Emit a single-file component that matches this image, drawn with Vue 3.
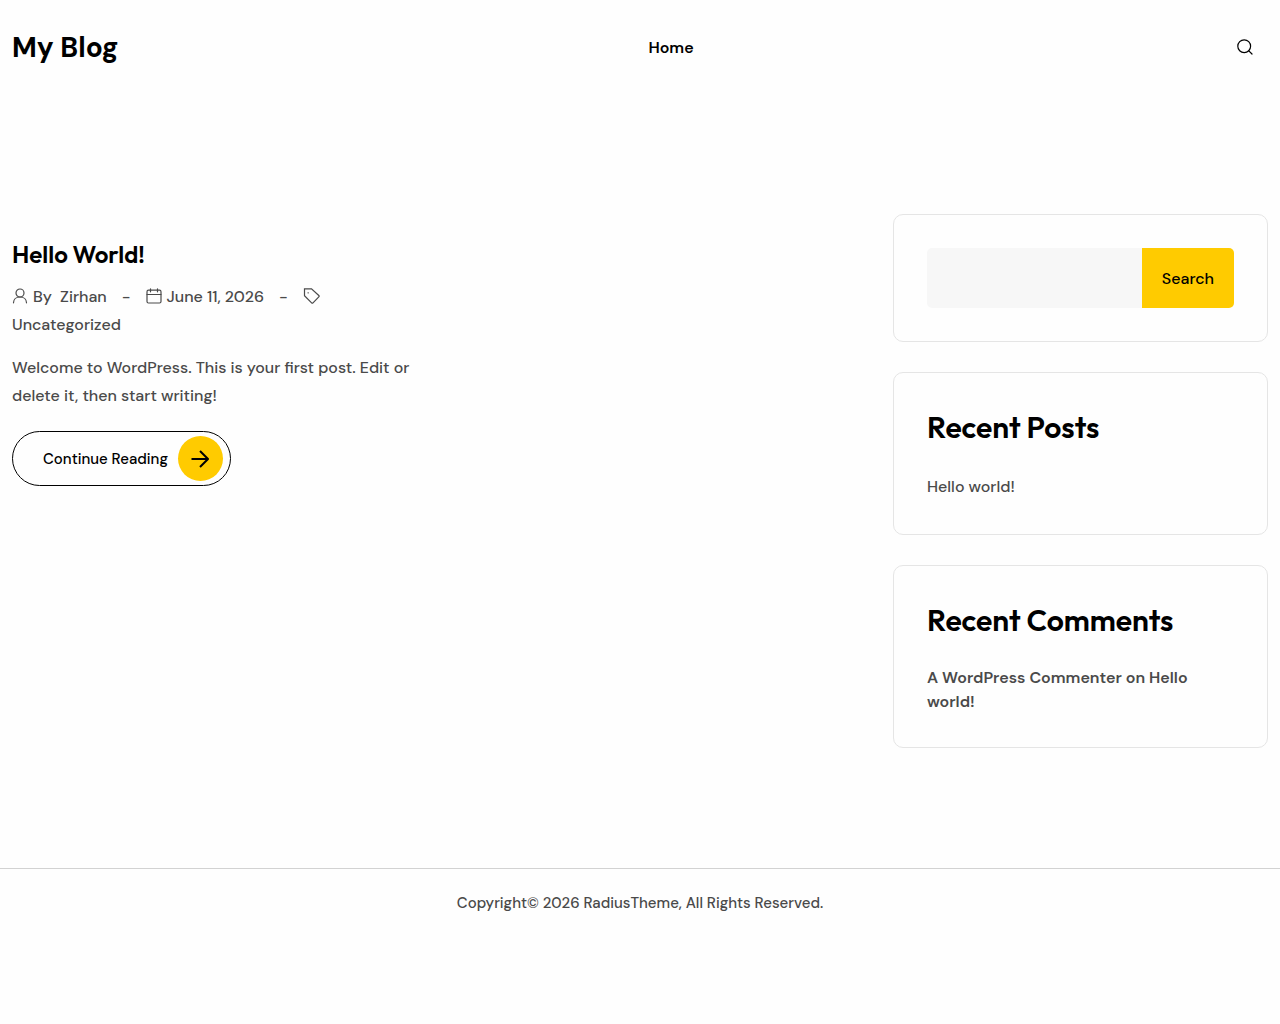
<template>
  <div class="site">
    <header class="site-header">
      <a class="logo" href="#">My Blog</a>
      <nav class="main-nav" aria-label="Main">
        <a href="#">Home</a>
      </nav>
      <div class="header-tools">
        <button class="search-toggle" type="button" aria-label="Open search" @click="focusSearch">
          <svg width="16" height="16" viewBox="0 0 16 16" fill="none" stroke="currentColor" stroke-width="1.2">
            <circle cx="7.2" cy="7.2" r="6.4" />
            <path d="M11.8 11.8l3.2 3.2" stroke-linecap="round" />
          </svg>
        </button>
      </div>
    </header>

    <main class="content">
      <div class="posts">
        <article v-for="post in posts" :key="post.title" class="post">
          <h2 class="post-title"><a href="#">{{ post.title }}</a></h2>
          <div class="post-meta">
            <svg class="meta-icon" width="16" height="16" viewBox="0 0 16 16">
              <circle cx="8" cy="5" r="4" />
              <path d="M1.5 14.8C1.5 11.4 4.1 9 8 9s6.500 2.400 6.500 5.800" />
            </svg>
            <span class="author">By <a href="#">{{ post.author }}</a></span>
            <span class="separator">-</span>
            <svg class="meta-icon" width="16" height="16" viewBox="0 0 16 16">
              <rect x="1" y="2.200" width="14" height="12.800" rx="1.500" />
              <path d="M1 6.500h14M4.500 .8v3M11.500 .8v3" />
            </svg>
            <span class="date">{{ post.date }}</span>
            <span class="separator">-</span>
            <svg class="meta-icon" width="18" height="16" viewBox="0 0 18 16">
              <path d="M1.500 .8h7l7.300 6.700q.7.700 0 1.400l-5.800 5.900q-.7.700-1.400 0L1.500 7.800z" />
              <path d="M5 4.800h.3" />
            </svg>
            {{ ' ' }}<a href="#">{{ post.category }}</a>
          </div>
          <p class="post-excerpt">{{ post.excerpt }}</p>
          <a class="read-more" href="#">
            Continue Reading
            <span class="read-more-icon">
              <svg width="18" height="18" viewBox="0 0 18 18" fill="none" stroke="currentColor" stroke-width="2">
                <path d="M.5 9H17M9 1l8 8-8 8" stroke-linejoin="round" />
              </svg>
            </span>
          </a>
        </article>
      </div>

      <aside class="sidebar">
        <section class="widget">
          <form class="search-form" role="search" @submit.prevent>
            <input ref="searchInput" v-model="query" type="search" aria-label="Search" />
            <button type="submit">Search</button>
          </form>
        </section>
        <section class="widget">
          <h2 class="widget-title">Recent Posts</h2>
          <ul class="recent-posts">
            <li><a href="#">Hello world!</a></li>
          </ul>
        </section>
        <section class="widget">
          <h2 class="widget-title">Recent Comments</h2>
          <ol class="recent-comments">
            <li><a href="#">A WordPress Commenter</a> on <a href="#">Hello world!</a></li>
          </ol>
        </section>
      </aside>
    </main>

    <footer class="site-footer">Copyright© 2026 RadiusTheme, All Rights Reserved.</footer>
  </div>
</template>

<script setup>
import { ref } from 'vue';

const query = ref('');
const searchInput = ref(null);

const posts = [
  {
    title: 'Hello World!',
    author: 'Zirhan',
    date: 'June 11, 2026',
    category: 'Uncategorized',
    excerpt: 'Welcome to WordPress. This is your first post. Edit or delete it, then start writing!',
  },
];

const focusSearch = () => {
  searchInput.value?.focus();
};
</script>

<style>
body {
  margin: 0;
  background: #fefefe;
}
</style>

<style scoped>
.site {
  color: #4a4a4a;
  font-family: "DM Sans", Inter, sans-serif;
  font-size: 16px;
  font-weight: 500;
  line-height: 28px;
}

a {
  color: inherit;
  text-decoration: none;
}

.site-header {
  display: grid;
  grid-template-columns: 1fr auto 1fr;
  align-items: center;
  padding: 25px 12px 23px;
  color: #000;
}

.logo {
  font-size: 28px;
  font-weight: 700;
  line-height: 46px;
}

.main-nav {
  padding-left: 62px;
  font-weight: 600;
}

.header-tools {
  display: flex;
  justify-content: flex-end;
  padding: 0 15px 2px 0;
}

.search-toggle {
  display: flex;
  padding: 0;
  border: 0;
  background: none;
  color: #000;
  cursor: pointer;
}

.content {
  display: grid;
  grid-template-columns: minmax(0, 1fr) 375px;
  gap: 52px;
  padding: 120px 12px;
}

.posts {
  display: grid;
  grid-template-columns: repeat(2, minmax(0, 1fr));
  align-items: start;
  gap: 24px;
  padding-top: 24px;
}

.post-title {
  margin: 0 0 13px;
  color: #000;
  font-family: Outfit, Inter, sans-serif;
  font-size: 24px;
  font-weight: 600;
  line-height: 32px;
}

.post-meta {
  margin-bottom: 15px;
}

.meta-icon {
  margin-right: 5px;
  vertical-align: -2px;
  fill: none;
  stroke: currentColor;
  stroke-width: 1.2;
  stroke-linecap: round;
}

.author a {
  margin-left: 4px;
}

.separator {
  margin: 0 15px 0 11px;
}

.author,
.date {
  margin-right: 4px;
}

.post-excerpt {
  margin: 0 0 21px;
}

.read-more {
  display: inline-flex;
  align-items: center;
  gap: 10px;
  padding: 4px 7px 4px 30px;
  border: 1px solid #000;
  border-radius: 28px;
  color: #000;
  font-size: 15px;
}

.read-more-icon {
  display: flex;
  align-items: center;
  justify-content: center;
  width: 45px;
  height: 45px;
  border-radius: 50%;
  background: #ffcb00;
}

.sidebar {
  display: flex;
  flex-direction: column;
  gap: 30px;
}

.widget {
  padding: 33px;
  border: 1px solid #e5e5e5;
  border-radius: 10px;
}

.widget-title {
  margin: 0 0 24px;
  color: #000;
  font-family: Outfit, Inter, sans-serif;
  font-size: 30px;
  font-weight: 600;
  line-height: 43px;
}

.search-form {
  display: flex;
}

.search-form input {
  flex: 1;
  min-width: 0;
  height: 60px;
  box-sizing: border-box;
  padding: 0 20px;
  border: 0;
  border-radius: 5px 0 0 5px;
  outline: none;
  background: #f7f7f7;
  font: inherit;
}

.search-form button {
  padding: 1px 20px 0;
  border: 0;
  border-radius: 0 5px 5px 0;
  background: #ffcb00;
  color: #000;
  font: inherit;
  cursor: pointer;
}

.recent-posts,
.recent-comments {
  margin: 0;
  padding: 0;
  list-style: none;
}

.recent-comments {
  font-weight: 600;
  line-height: 24px;
}

.site-footer {
  padding: 20px 12px;
  border-top: 1px solid #d2d2d2;
  font-size: 15px;
  text-align: center;
}
</style>
